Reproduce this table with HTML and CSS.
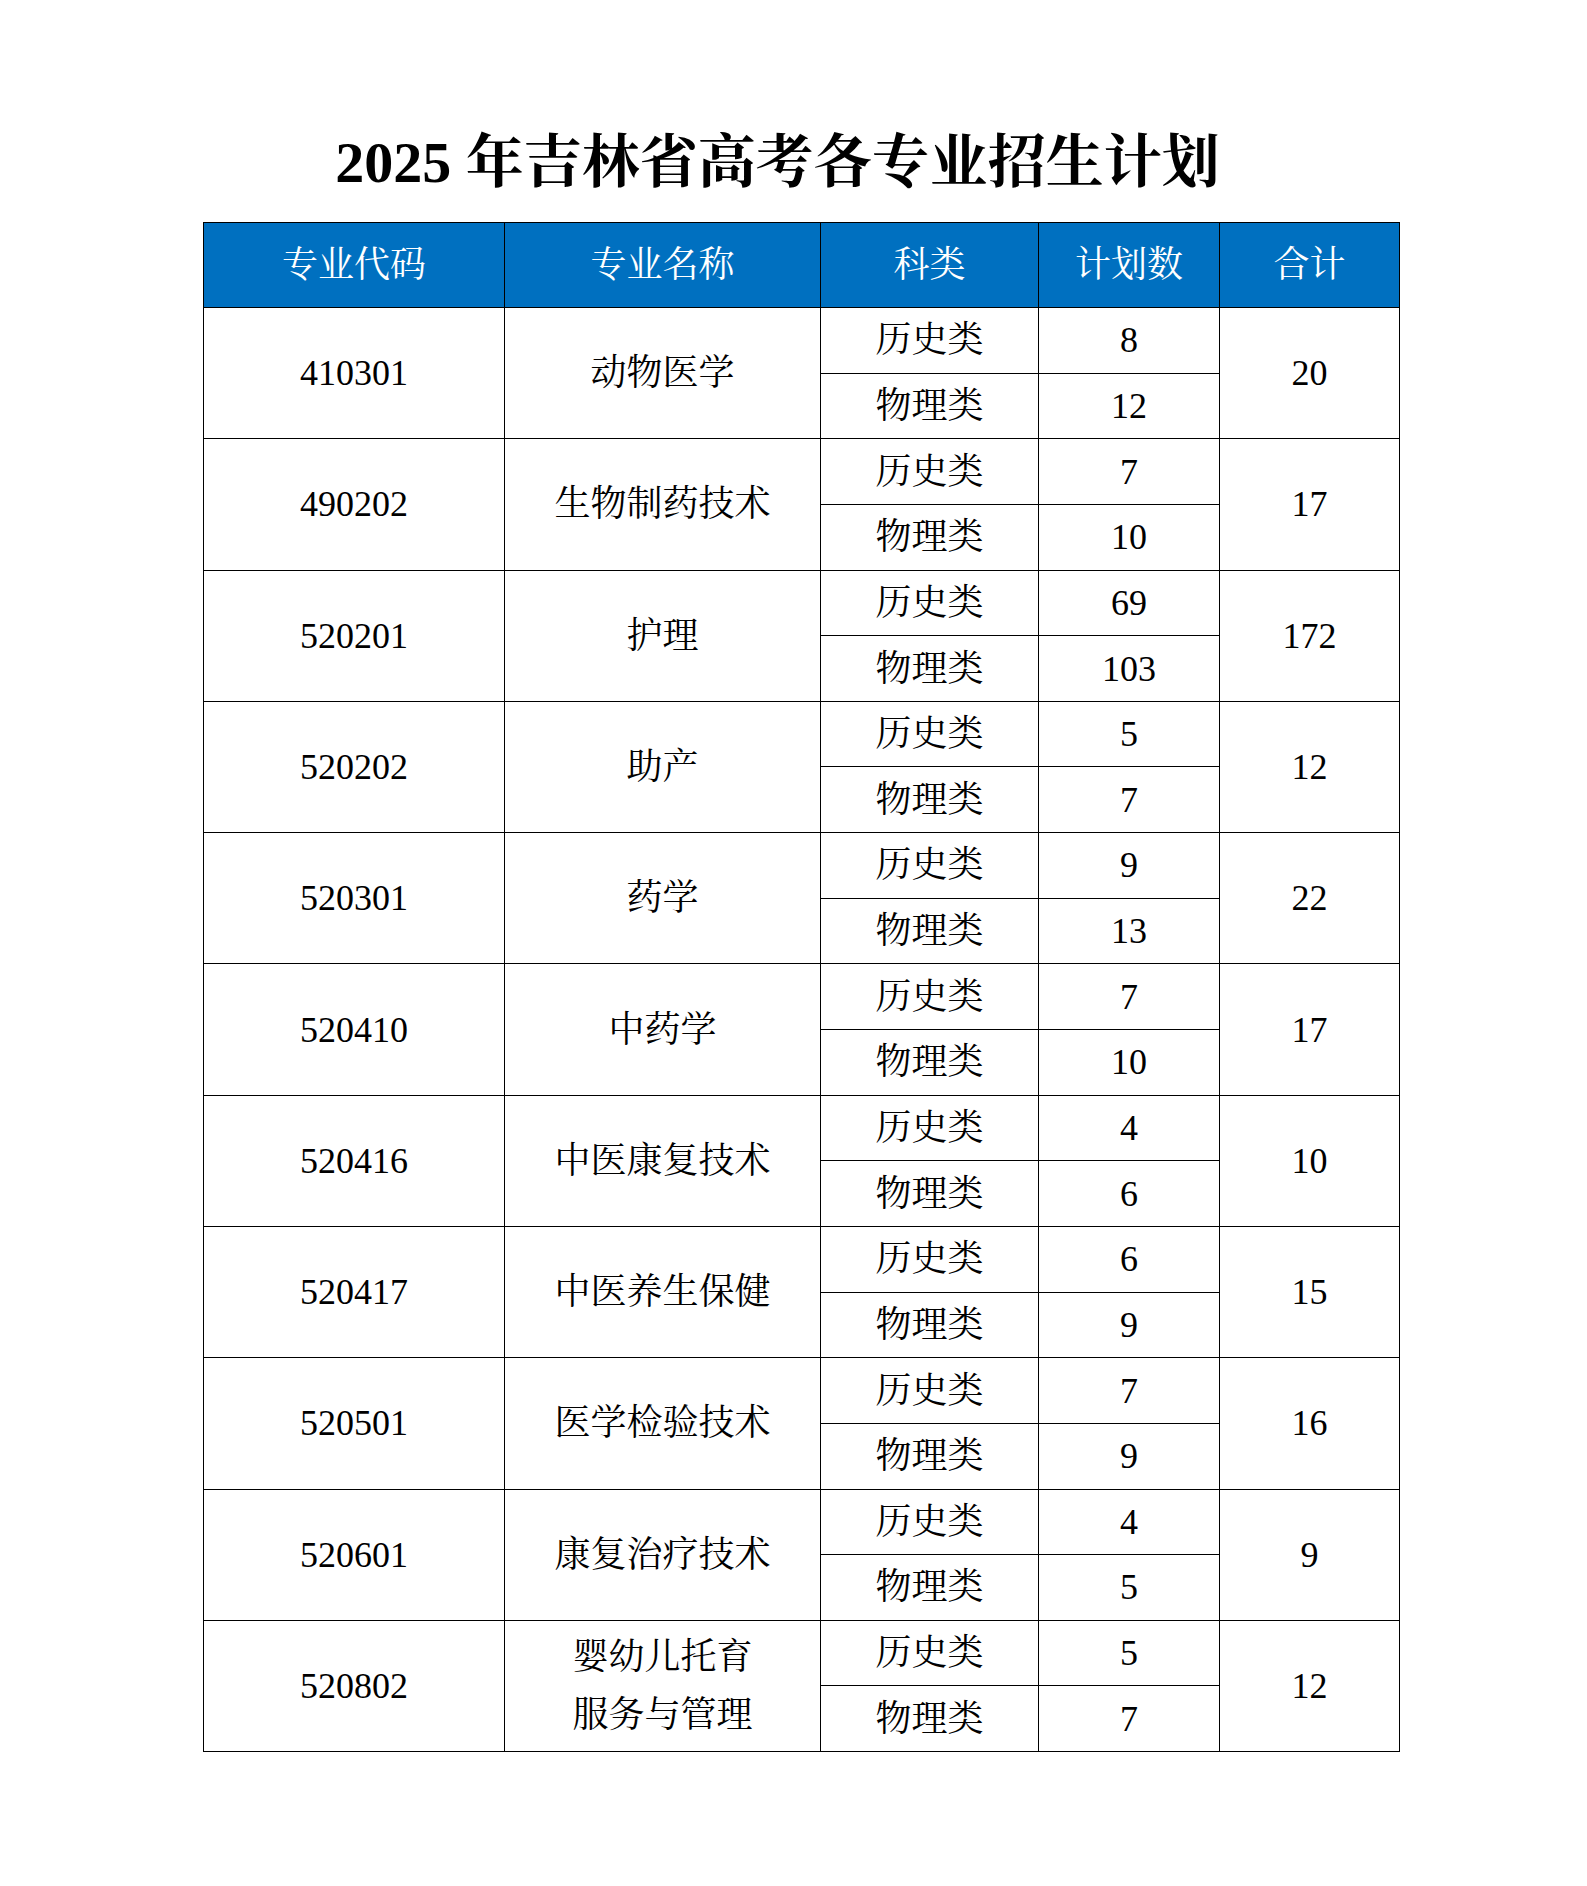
FILE: index.html
```html
<!DOCTYPE html>
<html lang="zh-CN">
<head>
<meta charset="utf-8">
<title>2025年吉林省高考各专业招生计划</title>
<link rel="stylesheet" href="styles.css">
</head>
<body>
<div class="page">
  <h1 class="title">2025 年吉林省高考各专业招生计划</h1>
  <table class="plan">
    <colgroup>
      <col class="c-code"><col class="c-name"><col class="c-type"><col class="c-num"><col class="c-total">
    </colgroup>
    <thead>
      <tr class="head"><th>专业代码</th><th>专业名称</th><th>科类</th><th>计划数</th><th>合计</th></tr>
    </thead>
    <tbody>
      <tr class="sub"><td rowspan="2">410301</td><td rowspan="2">动物医学</td><td>历史类</td><td>8</td><td rowspan="2">20</td></tr>
      <tr class="sub"><td>物理类</td><td>12</td></tr>
      <tr class="sub"><td rowspan="2">490202</td><td rowspan="2">生物制药技术</td><td>历史类</td><td>7</td><td rowspan="2">17</td></tr>
      <tr class="sub"><td>物理类</td><td>10</td></tr>
      <tr class="sub"><td rowspan="2">520201</td><td rowspan="2">护理</td><td>历史类</td><td>69</td><td rowspan="2">172</td></tr>
      <tr class="sub"><td>物理类</td><td>103</td></tr>
      <tr class="sub"><td rowspan="2">520202</td><td rowspan="2">助产</td><td>历史类</td><td>5</td><td rowspan="2">12</td></tr>
      <tr class="sub"><td>物理类</td><td>7</td></tr>
      <tr class="sub"><td rowspan="2">520301</td><td rowspan="2">药学</td><td>历史类</td><td>9</td><td rowspan="2">22</td></tr>
      <tr class="sub"><td>物理类</td><td>13</td></tr>
      <tr class="sub"><td rowspan="2">520410</td><td rowspan="2">中药学</td><td>历史类</td><td>7</td><td rowspan="2">17</td></tr>
      <tr class="sub"><td>物理类</td><td>10</td></tr>
      <tr class="sub"><td rowspan="2">520416</td><td rowspan="2">中医康复技术</td><td>历史类</td><td>4</td><td rowspan="2">10</td></tr>
      <tr class="sub"><td>物理类</td><td>6</td></tr>
      <tr class="sub"><td rowspan="2">520417</td><td rowspan="2">中医养生保健</td><td>历史类</td><td>6</td><td rowspan="2">15</td></tr>
      <tr class="sub"><td>物理类</td><td>9</td></tr>
      <tr class="sub"><td rowspan="2">520501</td><td rowspan="2">医学检验技术</td><td>历史类</td><td>7</td><td rowspan="2">16</td></tr>
      <tr class="sub"><td>物理类</td><td>9</td></tr>
      <tr class="sub"><td rowspan="2">520601</td><td rowspan="2">康复治疗技术</td><td>历史类</td><td>4</td><td rowspan="2">9</td></tr>
      <tr class="sub"><td>物理类</td><td>5</td></tr>
      <tr class="sub"><td rowspan="2">520802</td><td rowspan="2" class="two-line">婴幼儿托育<br>服务与管理</td><td>历史类</td><td>5</td><td rowspan="2">12</td></tr>
      <tr class="sub"><td>物理类</td><td>7</td></tr>
    </tbody>
  </table>
</div>
</body>
</html>
```
FILE: styles.css
```css
html, body {
  margin: 0;
  padding: 0;
  background: #ffffff;
}

.page {
  width: 1587px;
  font-family: "Liberation Serif", "Noto Serif CJK SC", "Noto Sans CJK SC", serif;
  color: #000000;
}

.title {
  margin: 128px 0 24px 0;
  padding-right: 32px;
  text-align: center;
  font-size: 58px;
  line-height: 70px;
  font-weight: bold;
}

.plan {
  margin-left: 203px;
  width: 1197px;
  border-collapse: collapse;
  table-layout: fixed;
  font-size: 36px;
}

.c-code { width: 301px; }
.c-name { width: 316px; }
.c-type { width: 218px; }
.c-num { width: 181px; }
.c-total { width: 180px; }

.plan th,
.plan td {
  border: 1px solid #000000;
  padding: 0;
  text-align: center;
  vertical-align: middle;
  line-height: 40px;
}

.plan th {
  background: #0070c0;
  color: #ffffff;
  font-weight: normal;
}

.head { height: 85px; }
.sub { height: 65.65px; }

.plan td.two-line {
  line-height: 58px;
}
```
